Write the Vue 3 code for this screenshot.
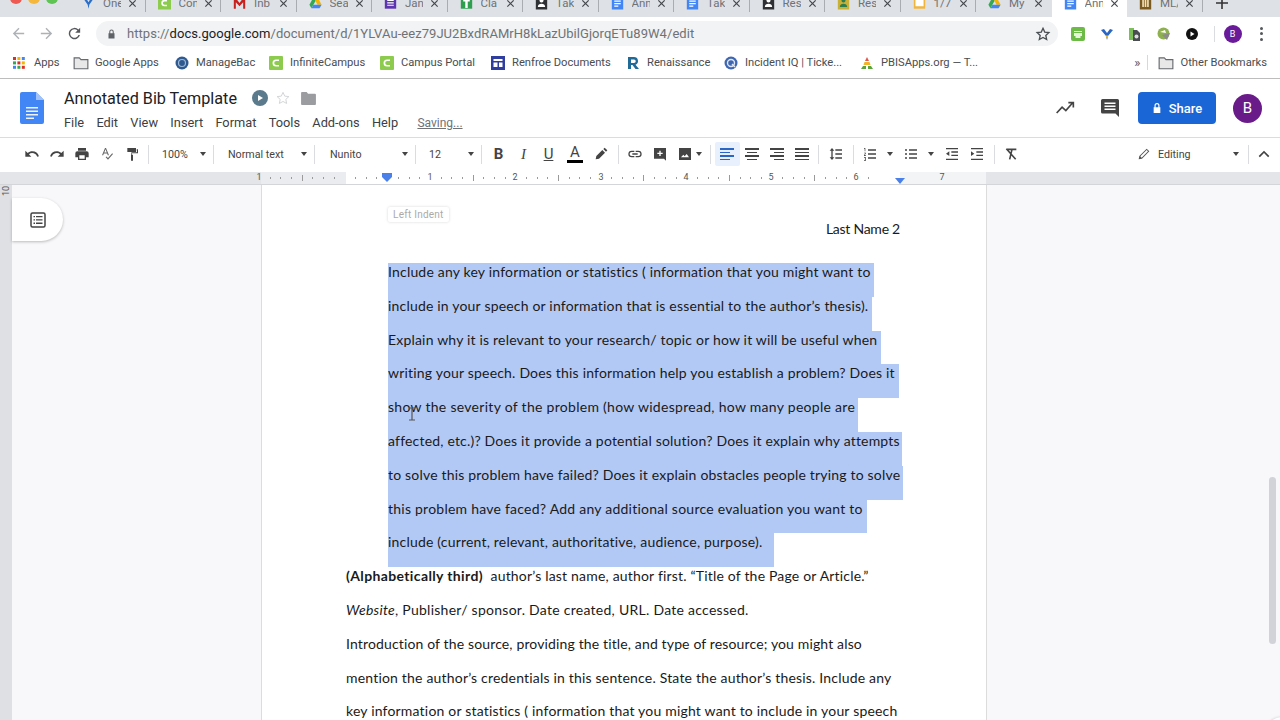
<template>
  <div class="window">
    <div class="tabstrip">
      <div class="traffic"><i class="red"></i><i class="amber"></i><i class="green"></i></div>
      <div v-for="(t, i) in tabs" :key="i" class="tab" :class="{ active: t.active, nosep: t.nosep }">
        <svg class="favicon" viewBox="0 0 16 16">
          <path v-for="(p, j) in favicons[t.icon]" :key="j" :d="p.d" :fill="p.fill" />
        </svg>
        <span class="tabtitle">{{ t.title }}</span>
        <svg class="tabx" viewBox="0 0 10 10"><path d="M1.500 1.500l7 7M8.500 1.500l-7 7" stroke="#45484c" stroke-width="1.300" /></svg>
      </div>
      <svg class="newtab" viewBox="0 0 12 12"><path d="M6 0v12M0 6h12" stroke="#333" stroke-width="1.600" /></svg>
    </div>

    <div class="navbar">
      <svg class="navicon" viewBox="0 0 24 24"><path d="M20 11H7.800l5.600-5.600L12 4l-8 8 8 8 1.400-1.400L7.800 13H20z" fill="#aeb1b5" /></svg>
      <svg class="navicon" viewBox="0 0 24 24"><path d="M4 11h12.200l-5.600-5.600L12 4l8 8-8 8-1.400-1.400 5.600-5.600H4z" fill="#aeb1b5" /></svg>
      <svg class="navicon" viewBox="0 0 24 24"><path d="M17.600 6.400A8 8 0 1 0 19.700 14h-2.100a6 6 0 1 1-1.400-6.200L13 11h7V4z" fill="#55585c" /></svg>
      <div class="omnibox">
        <svg class="lock" viewBox="0 0 12 14"><path d="M3 6V4a3 3 0 0 1 6 0v2h1v7H2V6zm1.400 0h3.200V4a1.600 1.600 0 0 0-3.200 0z" fill="#5f6368" /></svg>
        <span class="url">https://<b>docs.google.com</b>/document/d/1YLVAu-eez79JU2BxdRAMrH8kLazUbilGjorqETu89W4/edit</span>
        <svg class="star" viewBox="0 0 24 24"><path d="M12 3.500l2.600 5.700 6.200.7-4.600 4.200 1.300 6.100L12 17.200l-5.500 3 1.300-6.100-4.600-4.200 6.200-.7z" fill="none" stroke="#4b4e52" stroke-width="2" /></svg>
      </div>
      <div class="extensions">
        <svg class="ext" viewBox="0 0 14 14"><rect width="14" height="14" rx="2" fill="#6cbb47" /><path d="M3 4h8v1H3zM3 6h8v3H9.500v2h-5V9H3z" fill="#e6f4dc" /></svg>
        <svg class="ext" viewBox="0 0 14 14"><path d="M1 3l3-1 3 4 3-4 3 1-5 6-1 4-1-4z" fill="#2a66c4" /><path d="M5.500 8.500h3L7 12z" fill="#e2b93b" /></svg>
        <svg class="ext" viewBox="0 0 14 14"><path d="M1 1h5v12H1z" fill="#7cbf5a" /><path d="M5 3h4l3 3v8H5z" fill="#4a4d51" /><circle cx="8.500" cy="9.500" r="2" fill="#ddd" /></svg>
        <svg class="ext" viewBox="0 0 14 14"><circle cx="6.500" cy="6.500" r="6" fill="#8fb04e" /><path d="M5 8l8-2-3 7z" fill="#8c8c8c" /><path d="M3 5l5-2 1 3z" fill="#fff" /></svg>
        <svg class="ext" viewBox="0 0 14 14"><circle cx="7" cy="7" r="6" fill="#111" /><path d="M5.500 4.500l4 2.500-4 2.500z" fill="#fff" /></svg>
        <span class="extsep"></span>
        <span class="avatar-small">B</span>
        <span class="kebab"><i></i><i></i><i></i></span>
      </div>
    </div>

    <div class="bookmarks">
      <svg class="appsgrid" viewBox="0 0 12 12">
        <rect v-for="(c, i) in gridColors" :key="i" :x="(i % 3) * 4.400" :y="Math.floor(i / 3) * 4.400" width="3" height="3" :fill="c" />
      </svg>
      <span class="bm apps">Apps</span>
      <span v-for="b in bookmarks" :key="b.label" class="bm" :style="{ width: b.w + 'px' }">
        <svg class="bmicon" :class="{ wide: b.icon === 'folder' }" viewBox="0 0 14 14">
          <template v-if="b.icon === 'folder'">
            <path d="M1 2.500h4.500L7 4h6v8H1z" fill="#e8e8e8" stroke="#66696d" />
          </template>
          <template v-else-if="b.icon === 'campus'">
            <rect width="14" height="14" rx="1" fill="#8ccb4e" />
            <path d="M10 3.500H7a3.500 3.500 0 0 0 0 7h3V9H7.200a2 2 0 0 1 0-4H10z" fill="#fff" />
          </template>
          <template v-else-if="b.icon === 'mb'">
            <circle cx="7" cy="7" r="6.500" fill="#2f5a8f" />
            <circle cx="7" cy="7" r="3.500" fill="none" stroke="#9db8d6" stroke-width="1.200" />
          </template>
          <template v-else-if="b.icon === 'renfroe'">
            <rect width="14" height="14" fill="#303f9f" />
            <path d="M2.500 3h9v2h-9zM2.500 6.500h4V11h-4zM8 6.500h3.500V11H8z" fill="#fff" />
          </template>
          <template v-else-if="b.icon === 'ren'">
            <path d="M2 1h6a4 4 0 0 1 1.500 7.700L13 13H9.500L6.500 9H5v4H2zm3 2.500V7h3a1.700 1.700 0 0 0 0-3.500z" fill="#1f6a96" />
          </template>
          <template v-else-if="b.icon === 'iq'">
            <circle cx="7" cy="7" r="6.500" fill="#3f66b0" />
            <circle cx="7" cy="7" r="3.500" fill="none" stroke="#dfe7f5" stroke-width="1.400" />
            <path d="M8 8l3 3" stroke="#dfe7f5" stroke-width="1.400" />
          </template>
          <template v-else>
            <path d="M7 1l2 4H5z" fill="#e2574c" />
            <path d="M4.500 6h5l1 3h-7z" fill="#f0b429" />
            <path d="M3 10h3v3H1zM8 10h3l2 3H8z" fill="#5da33c" />
          </template>
        </svg>
        {{ b.label }}
      </span>
      <span class="chevrons">»</span>
      <span class="bmsep"></span>
      <span class="bm other">
        <svg class="bmicon wide" viewBox="0 0 14 14"><path d="M1 2.500h4.500L7 4h6v8H1z" fill="#e8e8e8" stroke="#66696d" /></svg>
        Other Bookmarks
      </span>
    </div>

    <header class="docheader">
      <svg class="docslogo" viewBox="0 0 24 32">
        <path d="M2 0h14l8 8v22a2 2 0 0 1-2 2H2a2 2 0 0 1-2-2V2a2 2 0 0 1 2-2z" fill="#4285f4" />
        <path d="M16 0l8 8h-8z" fill="#a1c2fa" />
        <path d="M6 15h12v1.600H6zM6 18.500h12v1.600H6zM6 22h12v1.600H6zM6 25.500h8v1.600H6z" fill="#f1f1f1" />
      </svg>
      <div class="titleblock">
        <div class="titlerow">
          <span class="doctitle">Annotated Bib Template</span>
          <span class="playbadge"><i></i></span>
          <svg class="docstar" viewBox="0 0 24 24"><path d="M12 3.500l2.600 5.700 6.200.7-4.600 4.200 1.300 6.100L12 17.200l-5.500 3 1.300-6.100-4.600-4.200 6.200-.7z" fill="none" stroke="#d0d2d4" stroke-width="1.400" /></svg>
          <svg class="docfolder" viewBox="0 0 16 14"><path d="M0 1a1 1 0 0 1 1-1h5l1.500 2H15a1 1 0 0 1 1 1v10a1 1 0 0 1-1 1H1a1 1 0 0 1-1-1z" fill="#9a9c9f" /></svg>
        </div>
        <nav class="menubar">
          <span v-for="m in menus" :key="m">{{ m }}</span>
          <u class="saving">Saving...</u>
        </nav>
      </div>
      <div class="headright">
        <svg class="trend" viewBox="0 0 24 24"><path d="M2 18l6.500-7 4.500 4 8-9M16 5.500h6v6" fill="none" stroke="#444" stroke-width="2" /></svg>
        <svg class="comment" viewBox="0 0 18 18"><path d="M1.500 0h15A1.500 1.500 0 0 1 18 1.500V18l-3.500-3.500h-13A1.500 1.500 0 0 1 0 13V1.500A1.500 1.500 0 0 1 1.500 0z" fill="#444" /><path d="M3.500 3.500h11V5h-11zM3.500 6.500h11V8h-11zM3.500 9.500h11V11h-11z" fill="#fff" /></svg>
        <button class="share">
          <svg viewBox="0 0 12 14" width="10" height="12"><path d="M3 6V4a3 3 0 0 1 6 0v2h1v7H2V6zm1.400 0h3.200V4a1.600 1.600 0 0 0-3.200 0z" fill="#fff" /></svg>
          Share
        </button>
        <span class="avatar">B</span>
      </div>
    </header>

    <div class="toolbar">
      <svg class="ti first" viewBox="0 0 24 24"><path d="M12.500 8c-2.600 0-5 1-6.900 2.600L2 7v9h9l-3.600-3.600A8 8 0 0 1 20 16l2.400-.8A10.500 10.500 0 0 0 12.500 8z" fill="#444" /></svg>
      <svg class="ti" viewBox="0 0 24 24"><path d="M11.500 8c2.600 0 5 1 6.900 2.600L22 7v9h-9l3.600-3.600A8 8 0 0 0 4 16l-2.400-.8A10.500 10.500 0 0 1 11.500 8z" fill="#444" /></svg>
      <svg class="ti" viewBox="0 0 24 24"><path d="M19 8H5a3 3 0 0 0-3 3v6h4v4h12v-4h4v-6a3 3 0 0 0-3-3zm-3 11H8v-5h8zM18 3H6v4h12z" fill="#444" /></svg>
      <svg class="ti" viewBox="0 0 24 24"><path d="M4.500 14L9 3h1.500L15 14h-1.800l-1-2.700H7.300L6.300 14zm3.400-4.200h3.700L9.800 5zM21 12l-7.500 8.500L10 17l1.200-1.200 2.300 2.300 6.300-7.100z" fill="#666" /></svg>
      <svg class="ti" viewBox="0 0 24 24"><path d="M5 3h13v6H5zM19 5h2v6h-9v2h1.500v9h-3v-9H11V9.500h8.500z" fill="#444" /></svg>
      <span class="tsep s-a"></span>
      <span class="drop d-zoom">100%<em></em></span>
      <span class="tsep"></span>
      <span class="drop d-style">Normal text<em></em></span>
      <span class="tsep"></span>
      <span class="drop d-font">Nunito<em></em></span>
      <span class="tsep"></span>
      <span class="drop d-size">12<em></em></span>
      <span class="tsep"></span>
      <span class="fmt bold">B</span>
      <span class="fmt ital">I</span>
      <span class="fmt under">U</span>
      <span class="fmt colorA">A</span>
      <svg class="ti pen" viewBox="0 0 24 24"><path d="M4 20l1-5 9-9 4 4-9 9zM15.500 4.500l2-2 4 4-2 2z" fill="#444" /></svg>
      <span class="tsep"></span>
      <svg class="ti link" viewBox="0 0 24 24"><path d="M3.900 12A3.100 3.100 0 0 1 7 8.900h4V7H7a5 5 0 0 0 0 10h4v-1.900H7A3.100 3.100 0 0 1 3.900 12zM8 13h8v-2H8zm9-6h-4v1.900h4a3.100 3.100 0 0 1 0 6.200h-4V17h4a5 5 0 0 0 0-10z" fill="#444" /></svg>
      <svg class="ti" viewBox="0 0 24 24"><path d="M3 3h18v19l-3-3H3zm8 4v3H8v2h3v3h2v-3h3v-2h-3V7z" fill="#444" fill-rule="evenodd" /></svg>
      <svg class="ti" viewBox="0 0 24 24"><path d="M3 3h18v18H3zm3 14h12l-3.500-5-3 3.500L9.500 13z" fill="#444" fill-rule="evenodd" /></svg>
      <span class="caret c-img"></span>
      <span class="tsep"></span>
      <span class="alignbtn on first-al"><span class="lines left"><i></i><i></i><i></i><i></i></span></span>
      <span class="alignbtn"><span class="lines center"><i></i><i></i><i></i><i></i></span></span>
      <span class="alignbtn"><span class="lines right"><i></i><i></i><i></i><i></i></span></span>
      <span class="alignbtn"><span class="lines full"><i></i><i></i><i></i><i></i></span></span>
      <span class="tsep s-b"></span>
      <svg class="ti gap9" viewBox="0 0 24 24"><path d="M6 3l3.500 4H7v10h2.500L6 21l-3.500-4H5V7H2.500zM11 5h10v2H11zM11 11h10v2H11zM11 17h10v2H11z" fill="#444" /></svg>
      <span class="tsep"></span>
      <svg class="ti gap8" viewBox="0 0 24 24"><path d="M3 3h2v5H4V4H3zM3 10h3v1l-2 3h2v1H3v-1l2-3H3zM3 17h3v5H3v-1h2v-1H4v-1h1v-1H3zM9 5h12v2H9zM9 11h12v2H9zM9 17h12v2H9z" fill="#444" /></svg>
      <span class="caret"></span>
      <svg class="ti afterc" viewBox="0 0 24 24"><path d="M3 5h3v2H3zM3 11h3v2H3zM3 17h3v2H3zM9 5h12v2H9zM9 11h12v2H9zM9 17h12v2H9z" fill="#444" /></svg>
      <span class="caret"></span>
      <svg class="ti afterc" viewBox="0 0 24 24"><path d="M3 3h18v2H3zM11 8h10v2H11zM11 13h10v2H11zM3 19h18v2H3zM8 8v7l-5-3.500z" fill="#444" /></svg>
      <svg class="ti" viewBox="0 0 24 24"><path d="M3 3h18v2H3zM11 8h10v2H11zM11 13h10v2H11zM3 19h18v2H3zM3 8v7l5-3.500z" fill="#444" /></svg>
      <span class="tsep s-c"></span>
      <svg class="ti gap8" viewBox="0 0 24 24"><path d="M6 5h14M13.500 5l-3.500 15M5 4l14 16" fill="none" stroke="#444" stroke-width="2.400" /></svg>
      <div class="editing">
        <svg class="ti" viewBox="0 0 24 24"><path d="M4 20l1-5L16 4l4 4L9 19zM6.500 15.500l2 2L18 8l-2-2z" fill="#555" fill-rule="evenodd" /></svg>
        <span class="edlabel">Editing</span>
        <span class="caret"></span>
        <span class="tsep"></span>
        <svg class="ti up" viewBox="0 0 24 24"><path d="M12 7l8 8-1.800 1.800L12 10.600l-6.200 6.200L4 15z" fill="#444" /></svg>
      </div>
    </div>

    <div class="ruler">
      <svg class="ticks" width="1280" height="12">
        <rect v-for="t in ticks" :key="t.x" :x="t.x" :y="t.y" width="1" :height="t.h" fill="#9a9a9a" />
      </svg>
      <span v-for="n in rulerNums" :key="n.x" class="rnum" :style="{ left: n.x + 'px' }">{{ n.l }}</span>
      <span class="leftindent"></span>
      <span class="rightindent"></span>
    </div>

    <main class="canvas">
      <div class="vruler"><span>10</span></div>
      <button class="outline">
        <svg viewBox="0 0 16 16" width="16" height="16"><rect x="1" y="1" width="14" height="14" rx="1.500" fill="none" stroke="#444" stroke-width="1.500" /><path d="M3.500 4h1.500v1.300H3.500zM6 4h6.500v1.300H6zM3.500 7.300h1.500v1.300H3.500zM6 7.300h6.500v1.300H6zM3.500 10.600h1.500v1.300H3.500zM6 10.600h6.500v1.300H6z" fill="#444" /></svg>
      </button>
      <article class="page">
        <span class="tooltip">Left Indent</span>
        <div class="runninghead">Last Name 2</div>
        <div class="selected">
          <div v-for="(l, i) in selected" :key="i" class="line sel" :style="{ width: l.w + 'px', letterSpacing: l.ls }">{{ l.t }}</div>
        </div>
        <div class="body">
          <div class="line"><b>(Alphabetically third)</b>&nbsp; author’s last name, author first. “Title of the Page or Article.”</div>
          <div class="line loose"><i>Website</i>, Publisher/ sponsor. Date created, URL. Date accessed.</div>
          <div class="line tight">Introduction of the source, providing the title, and type of resource; you might also</div>
          <div class="line">mention the author’s credentials in this sentence. State the author’s thesis. Include any</div>
          <div class="line">key information or statistics ( information that you might want to include in your speech</div>
        </div>
        <svg class="ibeam" viewBox="0 0 8 14" width="8" height="14"><path d="M1 1h6M1 13h6M4 1v12" stroke="#555" stroke-width="1.200" fill="none" /></svg>
      </article>
      <div class="scrollthumb"></div>
      <span class="explore"></span>
    </main>
  </div>
</template>

<script setup>
const favicons = {
  y: [{ d: 'M2 3l3-1 3 5 3-5 3 1-5 7-1 5-1-5z', fill: '#2b6fc9' }],
  campus: [{ d: 'M0 1h16v15H0z', fill: '#8ccb4e' }, { d: 'M11 4H8a4 4 0 0 0 0 8h3v-2H8a2 2 0 0 1 0-4h3z', fill: '#fff' }],
  gmail: [{ d: 'M1 2h2.500L8 8l4.500-6H15v13h-2.500V7L8 12 3.500 7v8H1z', fill: '#c5221f' }],
  drive: [{ d: 'M5.500 1h5l5 9h-5z', fill: '#f4b400' }, { d: 'M5.500 1L.5 10l2.500 4.500L8 5.500z', fill: '#34a853' }, { d: 'M3 14.500h10l2.500-4.500h-10z', fill: '#4285f4' }],
  sheet: [{ d: 'M1 1h14v14H1z', fill: '#5e35b1' }, { d: 'M4 4h8v1.500H4zM4 7h8v1.500H4zM4 10h8v1.500H4z', fill: '#fff' }],
  classroom: [{ d: 'M1 1h14v14H1z', fill: '#2e9e4f' }, { d: 'M4 3h8v3H9.500v8h-3V6H4z', fill: '#fff' }],
  person: [{ d: 'M1 1h14v15H1z', fill: '#2f3033' }, { d: 'M5.500 5a2.500 2.500 0 0 1 5 0 2.500 2.500 0 0 1-5 0zM3.500 13c0-3 2-4 4.500-4s4.500 1 4.500 4z', fill: '#fff' }],
  docs: [{ d: 'M1 1h14v15H1z', fill: '#4285f4' }, { d: 'M4 5h8v1.500H4zM4 8h8v1.500H4zM4 11h5v1.500H4z', fill: '#fff' }],
  personY: [{ d: 'M1 1h14v15H1z', fill: '#c9b037' }, { d: 'M5.500 5a2.500 2.500 0 0 1 5 0 2.500 2.500 0 0 1-5 0zM3.500 13c0-3 2-4 4.500-4s4.500 1 4.500 4z', fill: '#2f7d4f' }],
  note: [{ d: 'M1 0h14v15H1z', fill: '#f2b53c' }, { d: 'M3 0h10v12H3z', fill: '#fff' }],
  mla: [{ d: 'M1 1h14v15H1z', fill: '#7a5a1e' }, { d: 'M4 4h2v9H4zM7 4h2v9H7zM10 4h2v9h-2z', fill: '#f0e2bd' }]
}

const tabs = [
  { title: 'One', icon: 'y' },
  { title: 'Con', icon: 'campus' },
  { title: 'Inb', icon: 'gmail' },
  { title: 'Sea', icon: 'drive' },
  { title: 'Jan', icon: 'sheet' },
  { title: 'Cla', icon: 'classroom' },
  { title: 'Tak', icon: 'person' },
  { title: 'Ann', icon: 'docs' },
  { title: 'Tak', icon: 'docs' },
  { title: 'Res', icon: 'person' },
  { title: 'Res', icon: 'personY' },
  { title: '1/7', icon: 'note' },
  { title: 'My', icon: 'drive', nosep: true },
  { title: 'Ann', icon: 'docs', active: true, nosep: true },
  { title: 'ML/', icon: 'mla' }
]

const gridColors = ['#d93025', '#f4b400', '#4285f4', '#34a853', '#d93025', '#f4b400', '#4285f4', '#34a853', '#d93025']

const bookmarks = [
  { label: 'Google Apps', icon: 'folder', w: 102 },
  { label: 'ManageBac', icon: 'mb', w: 94 },
  { label: 'InfiniteCampus', icon: 'campus', w: 111 },
  { label: 'Campus Portal', icon: 'campus', w: 111 },
  { label: 'Renfroe Documents', icon: 'renfroe', w: 135 },
  { label: 'Renaissance', icon: 'ren', w: 98 },
  { label: 'Incident IQ | Ticke...', icon: 'iq', w: 136 },
  { label: 'PBISApps.org — T...', icon: 'pbis', w: 120 }
]

const menus = ['File', 'Edit', 'View', 'Insert', 'Format', 'Tools', 'Add-ons', 'Help']

const rulerNums = [
  { l: '1', x: 259 }, { l: '1', x: 430 }, { l: '2', x: 515 }, { l: '3', x: 601 },
  { l: '4', x: 686 }, { l: '5', x: 771 }, { l: '6', x: 856 }, { l: '7', x: 942 }
]

// eighth-inch marks, a taller one at each half inch, none where a number sits
const ticks = []
for (let i = 1; i < 58; i++) {
  if (i % 8 === 0) continue
  ticks.push({ x: Math.round(259 + i * 10.68), y: i % 4 === 0 ? 3 : 5, h: i % 4 === 0 ? 6 : 2 })
}

const selected = [
  { t: 'Include any key information or statistics ( information that you might want to', w: 486 },
  { t: 'include in your speech or information that is essential to the author’s thesis).', w: 484 },
  { t: 'Explain why it is relevant to your research/ topic or how it will be useful when', w: 493 },
  { t: 'writing your speech. Does this information help you establish a problem? Does it', w: 511 },
  { t: 'show the severity of the problem (how widespread, how many people are', w: 470, ls: '.29px' },
  { t: 'affected, etc.)? Does it provide a potential solution? Does it explain why attempts', w: 514 },
  { t: 'to solve this problem have failed? Does it explain obstacles people trying to solve', w: 515 },
  { t: 'this problem have faced? Add any additional source evaluation you want to', w: 479, ls: '.24px' },
  { t: 'include (current, relevant, authoritative, audience, purpose).', w: 386 }
]
</script>

<style>
html, body { margin: 0; background: #fff; overflow: hidden; }
</style>

<style scoped>
.window {
  width: 1280px;
  height: 720px;
  overflow: hidden;
  display: flex;
  flex-direction: column;
  font-family: "Roboto", "Liberation Sans", sans-serif;
  color: #3c4043;
}

.tabstrip {
  height: 17px;
  flex: none;
  display: flex;
  align-items: flex-start;
  background: #dee1e6;
  padding-left: 70px;
  position: relative;
  overflow: hidden;
}
.traffic { position: absolute; left: 10px; top: -8px; display: flex; gap: 6px; }
.traffic i { width: 12px; height: 12px; border-radius: 50%; display: block; }
.traffic .red { background: #ee5a52; }
.traffic .amber { background: #f5b83d; }
.traffic .green { background: #5fc454; }
.tab {
  width: 75.500px;
  height: 27px;
  margin-top: -10px;
  flex: none;
  display: flex;
  align-items: flex-start;
  padding: 6px 0 0 12px;
  box-sizing: border-box;
  font-size: 11.500px;
  color: #6f7276;
  position: relative;
}
.tab::after {
  content: "";
  position: absolute;
  right: 0;
  top: 10px;
  width: 1px;
  height: 12px;
  background: #a9acb1;
}
.tab.nosep::after { display: none; }
.tab.active { background: #fff; border-radius: 8px 8px 0 0; }
.favicon { width: 13px; height: 14px; flex: none; }
.tabtitle { width: 18px; margin-left: 8px; overflow: hidden; white-space: nowrap; flex: none; line-height: 15px; }
.tabx { width: 9px; height: 9px; margin: 3px 0 0 7px; flex: none; }
.newtab { width: 12px; height: 12px; flex: none; margin-left: 13px; margin-top: -3px; }

.navbar {
  height: 33px;
  flex: none;
  display: flex;
  align-items: center;
  padding-left: 10px;
  background: #fff;
}
.navicon { width: 17px; height: 17px; margin-right: 11px; flex: none; }
.omnibox {
  width: 962px;
  height: 25px;
  margin-left: 2px;
  border-radius: 13px;
  background: #f1f3f4;
  display: flex;
  align-items: center;
  padding: 0 7px 0 11px;
  box-sizing: border-box;
  flex: none;
}
.lock { width: 9px; height: 12px; margin-right: 11px; flex: none; }
.url { font-size: 13px; color: #6f7276; letter-spacing: .05px; flex: 1; white-space: nowrap; }
.url b { font-weight: 400; color: #202124; }
.star { width: 16px; height: 16px; }
.extensions { display: flex; align-items: center; margin-left: 13px; }
.ext { width: 14px; height: 14px; display: block; flex: none; margin-right: 14.500px; }
.extsep { width: 1px; height: 16px; background: #dadce0; margin: 0 9px 0 0; }
.avatar-small {
  width: 18px; height: 18px; border-radius: 50%; background: #6a1b9a; color: #fff;
  font-size: 9px; display: flex; align-items: center; justify-content: center;
}
.kebab { display: flex; flex-direction: column; gap: 2.500px; margin-left: 18px; }
.kebab i { width: 3px; height: 3px; border-radius: 50%; background: #55585c; display: block; }

.bookmarks {
  height: 25px;
  flex: none;
  display: flex;
  align-items: center;
  padding: 0 0 3px 13px;
  background: #fff;
  font-size: 11.200px;
  color: #4a4d51;
  border-bottom: 1px solid #bdbdbd;
  box-sizing: content-box;
}
.appsgrid { width: 12px; height: 12px; margin-right: 9px; flex: none; }
.bm { display: flex; align-items: center; gap: 7px; white-space: nowrap; flex: none; }
.bm.apps { width: 39px; }
.bmicon { width: 14px; height: 14px; flex: none; }
.bmicon.wide { width: 16px; height: 16px; margin-right: -1px; }
.chevrons { margin-left: auto; font-size: 13px; color: #555; }
.bmsep { width: 1px; height: 15px; background: #d8d8d8; margin: 0 10px 0 7px; }
.bm.other { margin-right: 13px; }

.docheader {
  height: 59px;
  flex: none;
  display: flex;
  align-items: center;
  padding: 0 18px 0 20px;
  box-sizing: border-box;
  background: #fff;
  border-bottom: 1px solid #dadce0;
}
.docslogo { width: 24px; height: 32px; flex: none; }
.titleblock { margin-left: 20px; display: flex; flex-direction: column; gap: 7px; margin-top: 3px; }
.titlerow { display: flex; align-items: center; height: 20px; }
.doctitle { font-size: 16.200px; color: #202124; }
.playbadge {
  width: 16px; height: 16px; border-radius: 50%; background: #5b7a8c; margin-left: 15px;
  display: flex; align-items: center; justify-content: center;
}
.playbadge i { border-left: 5px solid #fff; border-top: 3.500px solid transparent; border-bottom: 3.500px solid transparent; margin-left: 2px; }
.docstar { width: 16px; height: 16px; margin-left: 7px; }
.docfolder { width: 15px; height: 13px; margin-left: 10px; }
.menubar { display: flex; align-items: center; gap: 12.300px; font-size: 12.800px; color: #3c4043; line-height: 16px; }
.saving { margin-left: 7px; color: #6f7276; font-size: 12px; }
.headright { margin-left: auto; display: flex; align-items: center; }
.trend { width: 20px; height: 20px; }
.comment { width: 18px; height: 18px; margin-left: 26px; }
.share {
  width: 78px; height: 32px; margin-left: 19px; border: 0; border-radius: 4px; background: #1a66d6; color: #fff;
  font: 500 13px "Roboto", sans-serif; display: flex; align-items: center; justify-content: center; gap: 7px; padding: 0;
}
.avatar {
  width: 29px; height: 29px; border-radius: 50%; background: #6a1b8a; color: #fff; margin-left: 17px;
  display: flex; align-items: center; justify-content: center; font-size: 15px;
}

.toolbar {
  height: 34px;
  flex: none;
  display: flex;
  align-items: center;
  padding-bottom: 2px;
  box-sizing: border-box;
  background: #fff;
  font-size: 10.700px;
  color: #444;
}
.ti { width: 16px; height: 16px; flex: none; margin-right: 9px; }
.ti.first { margin-left: 24px; }
.ti.link { margin-left: 8px; }
.ti.gap9 { margin-left: 9px; }
.ti.gap8 { margin-left: 8px; }
.ti.afterc { margin-left: 10px; }
.tsep { width: 1px; height: 19px; background: #dadce0; flex: none; }
.tsep.s-a { margin-left: -1px; }
.tsep.s-b { margin-left: 3.500px; }
.drop {
  flex: none; display: flex; align-items: center; justify-content: space-between;
  padding: 0 7.500px 0 13px; box-sizing: border-box; white-space: nowrap;
}
.d-zoom { width: 64px; }
.d-style { width: 100px; padding-left: 14px; }
.d-font { width: 100px; padding-left: 15px; }
.d-size { width: 65px; }
.drop em, .caret { width: 0; height: 0; border-left: 3.500px solid transparent; border-right: 3.500px solid transparent; border-top: 4px solid #444; display: block; flex: none; }
.caret { margin-left: 0; }
.caret.c-img { margin: 0 8.500px 0 -6.500px; }
.fmt { width: 25px; flex: none; text-align: center; font-size: 15px; color: #444; }
.fmt.bold { font-weight: 700; margin-left: 4px; }
.fmt.ital { font-style: italic; font-family: "Liberation Serif", serif; }
.fmt.under { text-decoration: underline; }
.fmt.colorA { border-bottom: 3px solid #000; line-height: 15px; width: 16px; margin: 0 10px 0 6px; }
.alignbtn { width: 25px; height: 24px; flex: none; display: flex; align-items: center; justify-content: center; border-radius: 2px; }
.alignbtn.first-al { margin-left: 3.500px; }
.alignbtn.on { background: #e8f0fe; }
.lines { width: 14px; display: flex; flex-direction: column; gap: 2px; color: #444; }
.on .lines { color: #2a66c4; }
.lines i { display: block; height: 1.500px; background: currentColor; width: 100%; }
.lines.left i:nth-child(even) { width: 70%; }
.lines.center { align-items: center; }
.lines.center i:nth-child(even) { width: 70%; }
.lines.right { align-items: flex-end; }
.lines.right i:nth-child(even) { width: 70%; }
.editing { margin-left: auto; display: flex; align-items: center; margin-right: 8px; }
.editing .ti { margin-right: 6px; }
.edlabel { width: 75px; }
.editing .caret { margin: 0 9px 0 0; }
.editing .up { margin: 0 0 0 7px; }

.ruler {
  height: 12px;
  flex: none;
  position: relative;
  border-bottom: 1px solid #d4d5d8;
  box-sizing: content-box;
  font-size: 9px;
  color: #555;
  background: linear-gradient(to right, #e4e5e9 261px, #ebecef 261px, #ebecef 346px, #fff 346px, #fff 900px, #f3f4f6 900px, #f3f4f6 986px, #e4e5e9 986px);
}
.ticks { position: absolute; left: 0; top: 0; }
.rnum { position: absolute; top: 0; transform: translateX(-50%); }
.leftindent { position: absolute; left: 382px; top: 1px; width: 10px; height: 4px; background: #4a80e8; }
.leftindent::after {
  content: ""; position: absolute; left: 0; top: 4px; border-left: 5px solid transparent; border-right: 5px solid transparent; border-top: 5px solid #4a80e8;
}
.rightindent { position: absolute; left: 895px; top: 6px; border-left: 5px solid transparent; border-right: 5px solid transparent; border-top: 6px solid #4a80e8; }

.canvas {
  flex: 1;
  position: relative;
  background: #f8f8fa;
  overflow: hidden;
  padding-left: 261px;
}
.vruler { position: absolute; left: 0; top: 0; width: 12px; height: 100%; background: #dfe0e4; font-size: 9px; color: #555; }
.vruler span { display: block; transform: rotate(-90deg); text-align: center; margin-top: 1px; }
.outline {
  position: absolute; left: 12px; top: 13px; width: 51px; height: 43px; border: 0; background: #fff;
  border-radius: 0 22px 22px 0; box-shadow: 0 1px 3px rgba(0,0,0,.25);
  display: flex; align-items: center; padding: 0 0 0 18px; box-sizing: border-box;
}
.page {
  width: 726px;
  height: 100%;
  background: #fff;
  box-sizing: border-box;
  border-left: 1px solid #dcdcdc;
  border-right: 1px solid #dcdcdc;
  padding: 27px 86px 0 84px;
  position: relative;
  font-family: "Lato", "Liberation Sans", sans-serif;
  font-size: 14px;
  letter-spacing: .19px;
  font-variant-ligatures: none;
  color: #1a1a1a;
}
.tooltip {
  position: absolute; left: 126px; top: 22px; height: 15px; line-height: 15px; padding: 0 5px;
  background: #fff; font-size: 10px; letter-spacing: .25px; color: #aaa; box-shadow: 0 0 3px rgba(0,0,0,.16);
  font-family: "Roboto", sans-serif; border-radius: 2px;
}
.runninghead { text-align: right; line-height: 34px; height: 34px; letter-spacing: -.25px; }
.selected { margin-top: 17px; margin-left: 42px; }
.line { height: 33.800px; line-height: 18px; white-space: nowrap; }
.line b { letter-spacing: .37px; }
.line.loose { letter-spacing: .27px; }
.line.tight { letter-spacing: .14px; }
.sel { background: #b3c9f5; }
.ibeam { position: absolute; left: 146px; top: 222px; }
.scrollthumb { position: absolute; right: 4px; top: 292px; width: 7px; height: 167px; border-radius: 4px; background: #d2d3d8; }
.explore { position: absolute; left: 1263px; top: 532px; width: 40px; height: 40px; border-radius: 50%; background: #fff; box-shadow: 0 0 3px rgba(0,0,0,.2); }
</style>
